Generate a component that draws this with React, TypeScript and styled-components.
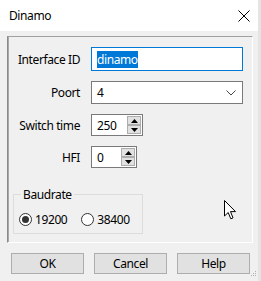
import styled, { createGlobalStyle } from "styled-components";

const GlobalStyle = createGlobalStyle`
  html, body {
    margin: 0;
    padding: 0;
    background: #f0f0f0;
  }
  body {
    font-family: "Noto Sans", "Open Sans", sans-serif;
    font-size: 12px;
    letter-spacing: -0.4px;
    color: #000;
  }
`

const Window = styled.div`
  position: relative;
  width: 261px;
  height: 281px;
  background: #f0f0f0;
  box-sizing: border-box;
  border-right: 3px solid #e4e4e4;
  overflow: hidden;
`

const TitleBar = styled.div`
  height: 31px;
  background: #ffffff;
  display: flex;
  align-items: center;
  justify-content: space-between;
  padding: 0 8px 0 9px;
`

const Title = styled.span`
  font-size: 12px;
  line-height: 1;
  padding-top: 1px;
`

const Body = styled.div`
  padding: 5px 0 0 7px;
  display: flex;
  flex-direction: column;
  gap: 10px;
`

const Panel = styled.div`
  position: relative;
  width: 246px;
  height: 207px;
  box-sizing: border-box;
  border: 1px solid;
  border-color: #a0a0a0 #ffffff #ffffff #8a8a8a;
  box-shadow: inset 1px 0 0 #a8a8a8;
  padding: 10px 0 0 0;
`

const FormGrid = styled.div`
  display: grid;
  grid-template-columns: 72px auto;
  column-gap: 11px;
  row-gap: 10px;
  align-items: center;
  justify-items: start;
`

const Label = styled.label`
  justify-self: end;
  white-space: nowrap;
`

const Field = styled.div<{ $w: number; $h: number; $focused?: boolean }>`
  width: ${p => p.$w}px;
  height: ${p => p.$h}px;
  box-sizing: border-box;
  border: 1px solid ${p => (p.$focused ? "#0078d7" : "#7a7a7a")};
  background: #fff;
  display: flex;
  align-items: center;
  padding-left: 5px;
  position: relative;
`

const Selected = styled.span`
  background: #0078d7;
  color: #fff;
  padding: 1px 0;
  line-height: 15px;
`

const Chevron = styled.svg`
  position: absolute;
  right: 6px;
  top: 8px;
`

const SpinBox = styled.div`
  position: absolute;
  right: 1px;
  top: 1px;
  bottom: 1px;
  width: 14px;
  display: flex;
  flex-direction: column;
`

const SpinButton = styled.div`
  flex: 1;
  box-sizing: border-box;
  border: 1px solid #adadad;
  background: #e1e1e1;
  display: flex;
  align-items: center;
  justify-content: center;
`

const GroupBox = styled.fieldset`
  margin: 18px 0 0 5px;
  width: 130px;
  height: 48px;
  box-sizing: border-box;
  border: 1px solid #dcdcdc;
  padding: 3px 0 0 5px;
  display: flex;
  align-items: center;
  gap: 14px;
`

const Legend = styled.legend`
  margin-left: 2px;
  padding: 0 2px;
`

const Radio = styled.label`
  display: flex;
  align-items: center;
  gap: 3px;
`

const RadioCircle = styled.span<{ $checked?: boolean }>`
  width: 13px;
  height: 13px;
  box-sizing: border-box;
  border-radius: 50%;
  border: 1px solid #333;
  background: #fff;
  display: flex;
  align-items: center;
  justify-content: center;
  &::after {
    content: "";
    width: 7px;
    height: 7px;
    border-radius: 50%;
    background: ${p => (p.$checked ? "#333" : "transparent")};
  }
`

const Pointer = styled.svg`
  position: absolute;
  left: 216px;
  top: 163px;
`

const ButtonRow = styled.div`
  display: flex;
  gap: 10px;
  padding-left: 4px;
`

const Button = styled.button`
  width: 73px;
  height: 21px;
  box-sizing: border-box;
  border: 1px solid #adadad;
  background: #e1e1e1;
  font-family: inherit;
  font-size: 12px;
  letter-spacing: inherit;
  color: #000;
  padding: 0;
`

const Grip = styled.svg`
  position: absolute;
  right: 1px;
  bottom: 3px;
`

const Arrow = ({ up }: { up?: boolean }) => (
  <svg width="7" height="4" viewBox="0 0 7 4">
    <path d={up ? "M0 4 L3.5 0 L7 4 Z" : "M0 0 L3.5 4 L7 0 Z"} fill="#000" />
  </svg>
)

const Spinner = ({ value, w }: { value: string; w: number }) => (
  <Field $w={w} $h={22}>
    {value}
    <SpinBox>
      <SpinButton><Arrow up /></SpinButton>
      <SpinButton><Arrow /></SpinButton>
    </SpinBox>
  </Field>
)

const App = () => {
  return (
    <Window>
      <GlobalStyle />
      <TitleBar>
        <Title>Dinamo</Title>
        <svg width="12" height="12" viewBox="0 0 12 12">
          <path d="M0.5 0.5 L11.5 11.5 M11.5 0.5 L0.5 11.5" stroke="#000" strokeWidth="1" />
        </svg>
      </TitleBar>
      <Body>
        <Panel>
          <FormGrid>
            <Label>Interface ID</Label>
            <Field $w={152} $h={24} $focused>
              <Selected>dinamo</Selected>
            </Field>
            <Label>Poort</Label>
            <Field $w={152} $h={23}>
              4
              <Chevron width="10" height="6" viewBox="0 0 10 6">
                <path d="M0.5 0.5 L5 5 L9.5 0.5" stroke="#444" fill="none" />
              </Chevron>
            </Field>
            <Label>Switch time</Label>
            <Spinner value="250" w={52} />
            <Label>HFI</Label>
            <Spinner value="0" w={46} />
          </FormGrid>
          <GroupBox>
            <Legend>Baudrate</Legend>
            <Radio><RadioCircle $checked />19200</Radio>
            <Radio><RadioCircle />38400</Radio>
          </GroupBox>
          <Pointer width="13" height="20" viewBox="0 0 13 20">
            <path d="M0.5 0.5 L0.5 16 L4.2 12.5 L6.8 18.8 L9 17.9 L6.5 11.6 L11.5 11.6 Z" fill="#fff" stroke="#000" strokeWidth="1" />
          </Pointer>
        </Panel>
        <ButtonRow>
          <Button>OK</Button>
          <Button>Cancel</Button>
          <Button>Help</Button>
        </ButtonRow>
      </Body>
      <Grip width="7" height="7" viewBox="0 0 7 7">
        <rect x="5" y="0" width="1" height="1" fill="#b0b0b0" />
        <rect x="3" y="2" width="1" height="1" fill="#b0b0b0" />
        <rect x="5" y="2" width="1" height="1" fill="#b0b0b0" />
        <rect x="1" y="4" width="1" height="1" fill="#b0b0b0" />
        <rect x="3" y="4" width="1" height="1" fill="#b0b0b0" />
        <rect x="5" y="4" width="1" height="1" fill="#b0b0b0" />
      </Grip>
    </Window>
  );
};

export default App;
